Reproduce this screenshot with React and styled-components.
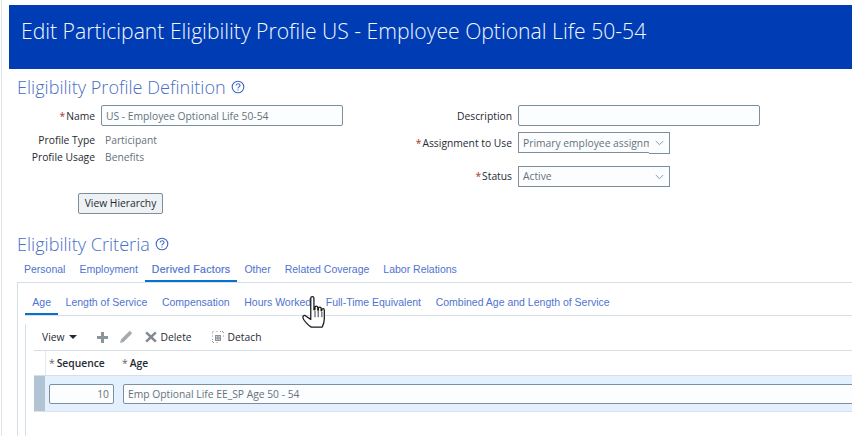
import React from 'react'
import styled, { createGlobalStyle } from 'styled-components'

const GlobalStyle = createGlobalStyle`
  html, body {
    margin: 0;
    padding: 0;
    background: #fff;
    overflow: hidden;
  }
  body {
    font-family: "Open Sans", "Noto Sans", "Liberation Sans", sans-serif;
    font-size: 10.3px;
    color: #1f2a33;
  }
`

const Page = styled.div`
  position: relative;
  width: 850px;
  height: 436px;
  margin-left: 1px;
  border-left: 1px solid #dfe3e8;
  overflow: hidden;
`

const Header = styled.header`
  display: flex;
  align-items: center;
  height: 64px;
  margin: 5px 0 0 7px;
  padding: 0 0 13px 12px;
  box-sizing: border-box;
  background: #003db5;
  color: #f4f8ff;
  font-family: "Open Sans", sans-serif;
  font-size: 21.15px;
  font-weight: 300;
  white-space: nowrap;
`

const Main = styled.main`
  padding-left: 15px;
`

const SectionTitle = styled.h2`
  display: flex;
  align-items: center;
  gap: 5px;
  height: 22px;
  margin: ${(p) => p.$top}px 0 0;
  color: #4a6fc4;
  font-family: "Open Sans", sans-serif;
  font-size: 18.1px;
  font-weight: 300;
`

const FormGrid = styled.div`
  display: grid;
  grid-template-columns: 383px 1fr;
  margin-top: 7px;
`

const Column = styled.div`
  display: flex;
  flex-direction: column;
`

const Row = styled.div`
  display: flex;
  align-items: center;
  gap: 6px;
  height: ${(p) => p.$h}px;
  margin-top: ${(p) => p.$mt || 0}px;
`

const Label = styled.label`
  width: ${(p) => p.$w}px;
  padding-bottom: ${(p) => (p.$lift ? 1 : 0)}px;
  text-align: right;
  white-space: nowrap;
  color: #1f2a33;
`

const Req = styled.span`
  color: #a5342a;
  margin-right: 1px;
`

const ReadOnly = styled.span`
  margin-left: 4px;
  color: #66727c;
`

const TextInput = styled.div`
  display: flex;
  align-items: center;
  width: ${(p) => p.$w}px;
  height: ${(p) => p.$h || 21}px;
  box-sizing: border-box;
  padding: 0 4px;
  border: 1px solid #7d8f9c;
  border-radius: 2px;
  background: #fcfdfe;
  color: #66727c;
  white-space: nowrap;
  overflow: hidden;
`

const NumberInput = styled(TextInput)`
  justify-content: flex-end;
`

const SelectBox = styled.div`
  display: flex;
  align-items: flex-start;
  width: 152px;
  height: ${(p) => (p.$split ? 22 : 21)}px;
`

const SelectText = styled.div`
  display: flex;
  align-items: center;
  flex: 1;
  min-width: 0;
  height: 21px;
  box-sizing: border-box;
  padding: 0 0 ${(p) => (p.$lift ? 1 : 0)}px 4px;
  border: 1px solid #7d8f9c;
  border-right: none;
  background: #fcfdfe;
  color: #66727c;
  white-space: nowrap;
  overflow: hidden;
`

const SelectArrow = styled.div`
  display: flex;
  align-items: center;
  justify-content: center;
  width: 21px;
  height: ${(p) => (p.$split ? 22 : 21)}px;
  box-sizing: border-box;
  border: 1px solid #7d8f9c;
  border-left: none;
  background: #fcfdfe;
`

const Button = styled.button`
  width: 85px;
  height: 21px;
  margin: 28px 0 0 61px;
  padding: 0 0 2px;
  border: 1px solid #7d8f9c;
  border-radius: 2px;
  background: #eef2f5;
  color: #1f2a33;
  font: inherit;
`

const TabBar = styled.nav`
  display: flex;
  height: ${(p) => p.$h}px;
  margin-top: ${(p) => p.$mt}px;
  padding-top: ${(p) => p.$pt}px;
  box-sizing: border-box;
  border-bottom: 1px solid #d6dfe6;
`

const Tab = styled.a`
  display: flex;
  align-items: center;
  height: 100%;
  box-sizing: border-box;
  padding: 0 7px 2px;
  border-bottom: 2px solid ${(p) => (p.$active ? '#0572ce' : 'transparent')};
  margin-bottom: -1px;
  color: #4f73d1;
  font-family: "Liberation Sans", sans-serif;
  font-size: 10.5px;
  letter-spacing: ${(p) => (p.$strong ? '.3px' : '0')};
  -webkit-text-stroke: ${(p) => (p.$strong ? '.2px' : '0')};
  white-space: nowrap;
`

const SubTab = styled(Tab)`
  padding: 0 7.3px 2px;
`

const OuterPanel = styled.section`
  border-left: 1px solid #d6dfe6;
  padding-left: 7px;
  height: 153px;
`

const InnerPanel = styled.div`
  border-left: 1px solid #d6dfe6;
  padding-left: 8px;
  height: 120px;
`

const Toolbar = styled.div`
  display: flex;
  align-items: center;
  height: 26px;
  margin-top: 8px;
  padding-left: 8px;
  color: #1f2a33;
`

const ToolItem = styled.span`
  display: flex;
  align-items: center;
  gap: 4px;
  margin-right: ${(p) => p.$mr}px;
  white-space: nowrap;
`

const Caret = styled.span`
  width: 0;
  height: 0;
  border-left: 4px solid transparent;
  border-right: 4px solid transparent;
  border-top: 4px solid #1f2a33;
`

const HeadRow = styled.div`
  display: flex;
  height: 26px;
  box-sizing: border-box;
  border-top: 1px solid #d6dfe6;
  border-bottom: 1px solid #d6dfe6;
`

const HeadCell = styled.div`
  display: flex;
  align-items: center;
  width: ${(p) => p.$w}px;
  padding-left: ${(p) => p.$pl}px;
  box-sizing: border-box;
  border-left: ${(p) => (p.$divider ? '1px solid #e4e9ed' : 'none')};
  font-weight: 600;
  white-space: nowrap;
`

const HeadReq = styled.span`
  color: #5a6670;
  font-weight: 400;
  margin-right: 2px;
`

const DataRow = styled.div`
  display: flex;
  align-items: center;
  height: 36px;
  box-sizing: border-box;
  border-bottom: 1px solid #dde1e4;
  background: #e3f0fd;
  width: 830px;
`

const RowHandle = styled.div`
  align-self: stretch;
  width: 11px;
  margin-right: 4px;
  background: #b0c4d4;
`

const AgeCell = styled.div`
  margin-left: 9px;
`

const HandCursor = styled.svg`
  position: absolute;
  left: 298px;
  top: 295px;
`

const HelpIcon = () => (
  <svg width="14" height="14" viewBox="0 0 14 14" fill="none" stroke="#3f67c0">
    <circle cx="7" cy="7" r="5.8" strokeWidth="1.1" />
    <path d="M5.1 5.6c0-2.5 3.900-2.500 3.900-.2 0 1.500-2 1.400-2 3" strokeWidth="1.1" />
    <path d="M7 9.400v1.200" strokeWidth="1.1" />
  </svg>
)

const Chevron = () => (
  <svg width="9" height="6" viewBox="0 0 9 6" fill="none" stroke="#8a98a3" strokeWidth="1">
    <path d="M.8 1l3.700 3.700L8.200 1" />
  </svg>
)

const App = () => (
  <>
    <GlobalStyle />
    <Page>
      <Header>Edit Participant Eligibility Profile US - Employee Optional Life 50-54</Header>
      <Main>
        <SectionTitle $top={7}>
          Eligibility Profile Definition <HelpIcon />
        </SectionTitle>
        <FormGrid>
          <Column>
            <Row $h={21}>
              <Label $w={78}><Req>*</Req>Name</Label>
              <TextInput $w={242}>US - Employee Optional Life 50-54</TextInput>
            </Row>
            <Row $h={17} $mt={5}>
              <Label $w={78}>Profile Type</Label>
              <ReadOnly>Participant</ReadOnly>
            </Row>
            <Row $h={17}>
              <Label $w={78}>Profile Usage</Label>
              <ReadOnly>Benefits</ReadOnly>
            </Row>
            <Button>View Hierarchy</Button>
          </Column>
          <Column>
            <Row $h={21}>
              <Label $w={112}>Description</Label>
              <TextInput $w={242} />
            </Row>
            <Row $h={22} $mt={6}>
              <Label $w={112}><Req>*</Req>Assignment to Use</Label>
              <SelectBox $split>
                <SelectText>Primary employee assignm</SelectText>
                <SelectArrow $split><Chevron /></SelectArrow>
              </SelectBox>
            </Row>
            <Row $h={21} $mt={12}>
              <Label $w={112} $lift><Req>*</Req>Status</Label>
              <SelectBox>
                <SelectText $lift>Active</SelectText>
                <SelectArrow><Chevron /></SelectArrow>
              </SelectBox>
            </Row>
          </Column>
        </FormGrid>
        <SectionTitle $top={19}>
          Eligibility Criteria <HelpIcon />
        </SectionTitle>
        <TabBar $h={23} $mt={5} $pt={0}>
          <Tab>Personal</Tab>
          <Tab>Employment</Tab>
          <Tab $active $strong>Derived Factors</Tab>
          <Tab>Other</Tab>
          <Tab>Related Coverage</Tab>
          <Tab>Labor Relations</Tab>
        </TabBar>
        <OuterPanel>
          <TabBar $h={33} $mt={0} $pt={9}>
            <SubTab $active>Age</SubTab>
            <SubTab>Length of Service</SubTab>
            <SubTab>Compensation</SubTab>
            <SubTab>Hours Worked</SubTab>
            <SubTab>Full-Time Equivalent</SubTab>
            <SubTab>Combined Age and Length of Service</SubTab>
          </TabBar>
          <InnerPanel>
            <Toolbar>
              <ToolItem $mr={20}>View <Caret /></ToolItem>
              <ToolItem $mr={12}>
                <svg width="11" height="11" viewBox="0 0 11 11" fill="#8b959c">
                  <path d="M4 0h3v4h4v3H7v4H4V7H0V4h4z" />
                </svg>
              </ToolItem>
              <ToolItem $mr={13}>
                <svg width="12" height="12" viewBox="0 0 12 12" fill="#a3abb1">
                  <path d="M0 12l1-3.600L8.400 1l2.600 2.600L3.600 11zM9.200.3l.8-.3 2 2-.3.8-.7.7L8.500 1z" />
                </svg>
              </ToolItem>
              <ToolItem $mr={20}>
                <svg width="12" height="12" viewBox="0 0 12 12" fill="#7f8a92">
                  <path d="M2 .5L6 4.300 10 .5 11.700 2.200 7.800 6l3.900 3.800L10 11.500 6 7.700 2 11.500.3 9.800 4.200 6 .3 2.200z" />
                </svg>
                Delete
              </ToolItem>
              <ToolItem $mr={0}>
                <svg width="12" height="12" viewBox="0 0 12 12" fill="none" stroke="#8b959c">
                  <path d="M.5 2.500v-2h2M4.500.5h1.500M8 .5h3.500v2M11.500 4.500v1M.5 4.500v1.500M.5 8v3.500h2M4.500 11.500h1.500" strokeDasharray="1 1" />
                  <rect x="3.500" y="4.500" width="5" height="5" fill="#c9d0d5" stroke="#8b959c" />
                  <path d="M6 4.500v5M3.500 7h5" />
                </svg>
                Detach
              </ToolItem>
            </Toolbar>
            <HeadRow>
              <HeadCell $w={11} />
              <HeadCell $w={77} $pl={3} $divider><HeadReq>*</HeadReq>Sequence</HeadCell>
              <HeadCell $w={300} $pl={0}><HeadReq>*</HeadReq>Age</HeadCell>
            </HeadRow>
            <DataRow>
              <RowHandle />
              <NumberInput $w={65} $h={20}>10</NumberInput>
              <AgeCell>
                <TextInput $w={740} $h={20}>Emp Optional Life EE_SP Age 50 - 54</TextInput>
              </AgeCell>
            </DataRow>
          </InnerPanel>
        </OuterPanel>
      </Main>
      <HandCursor width="30" height="36" viewBox="0 0 28 34">
        <path
          d="M10 3c0-2 3-2 3 0v11l1-.2v-2c0-1.600 2.600-1.600 2.600 0v2.400l.6.100v-1.700c0-1.500 2.600-1.500 2.600 0v2.200l.6.200v-1c0-1.500 2.400-1.500 2.400.3v8c0 4-.6 5-2 8H10.500C8 29 3 24 2.600 21.500c-.4-2 1.600-2.800 3-1.500L10 23z"
          fill="#fff"
          stroke="#1a1a1a"
          strokeWidth="1.200"
          strokeLinejoin="round"
        />
        <path d="M14 15v6M17 15v6M20.500 16v5" stroke="#1a1a1a" strokeWidth=".8" fill="none" />
      </HandCursor>
    </Page>
  </>
)

export default App
